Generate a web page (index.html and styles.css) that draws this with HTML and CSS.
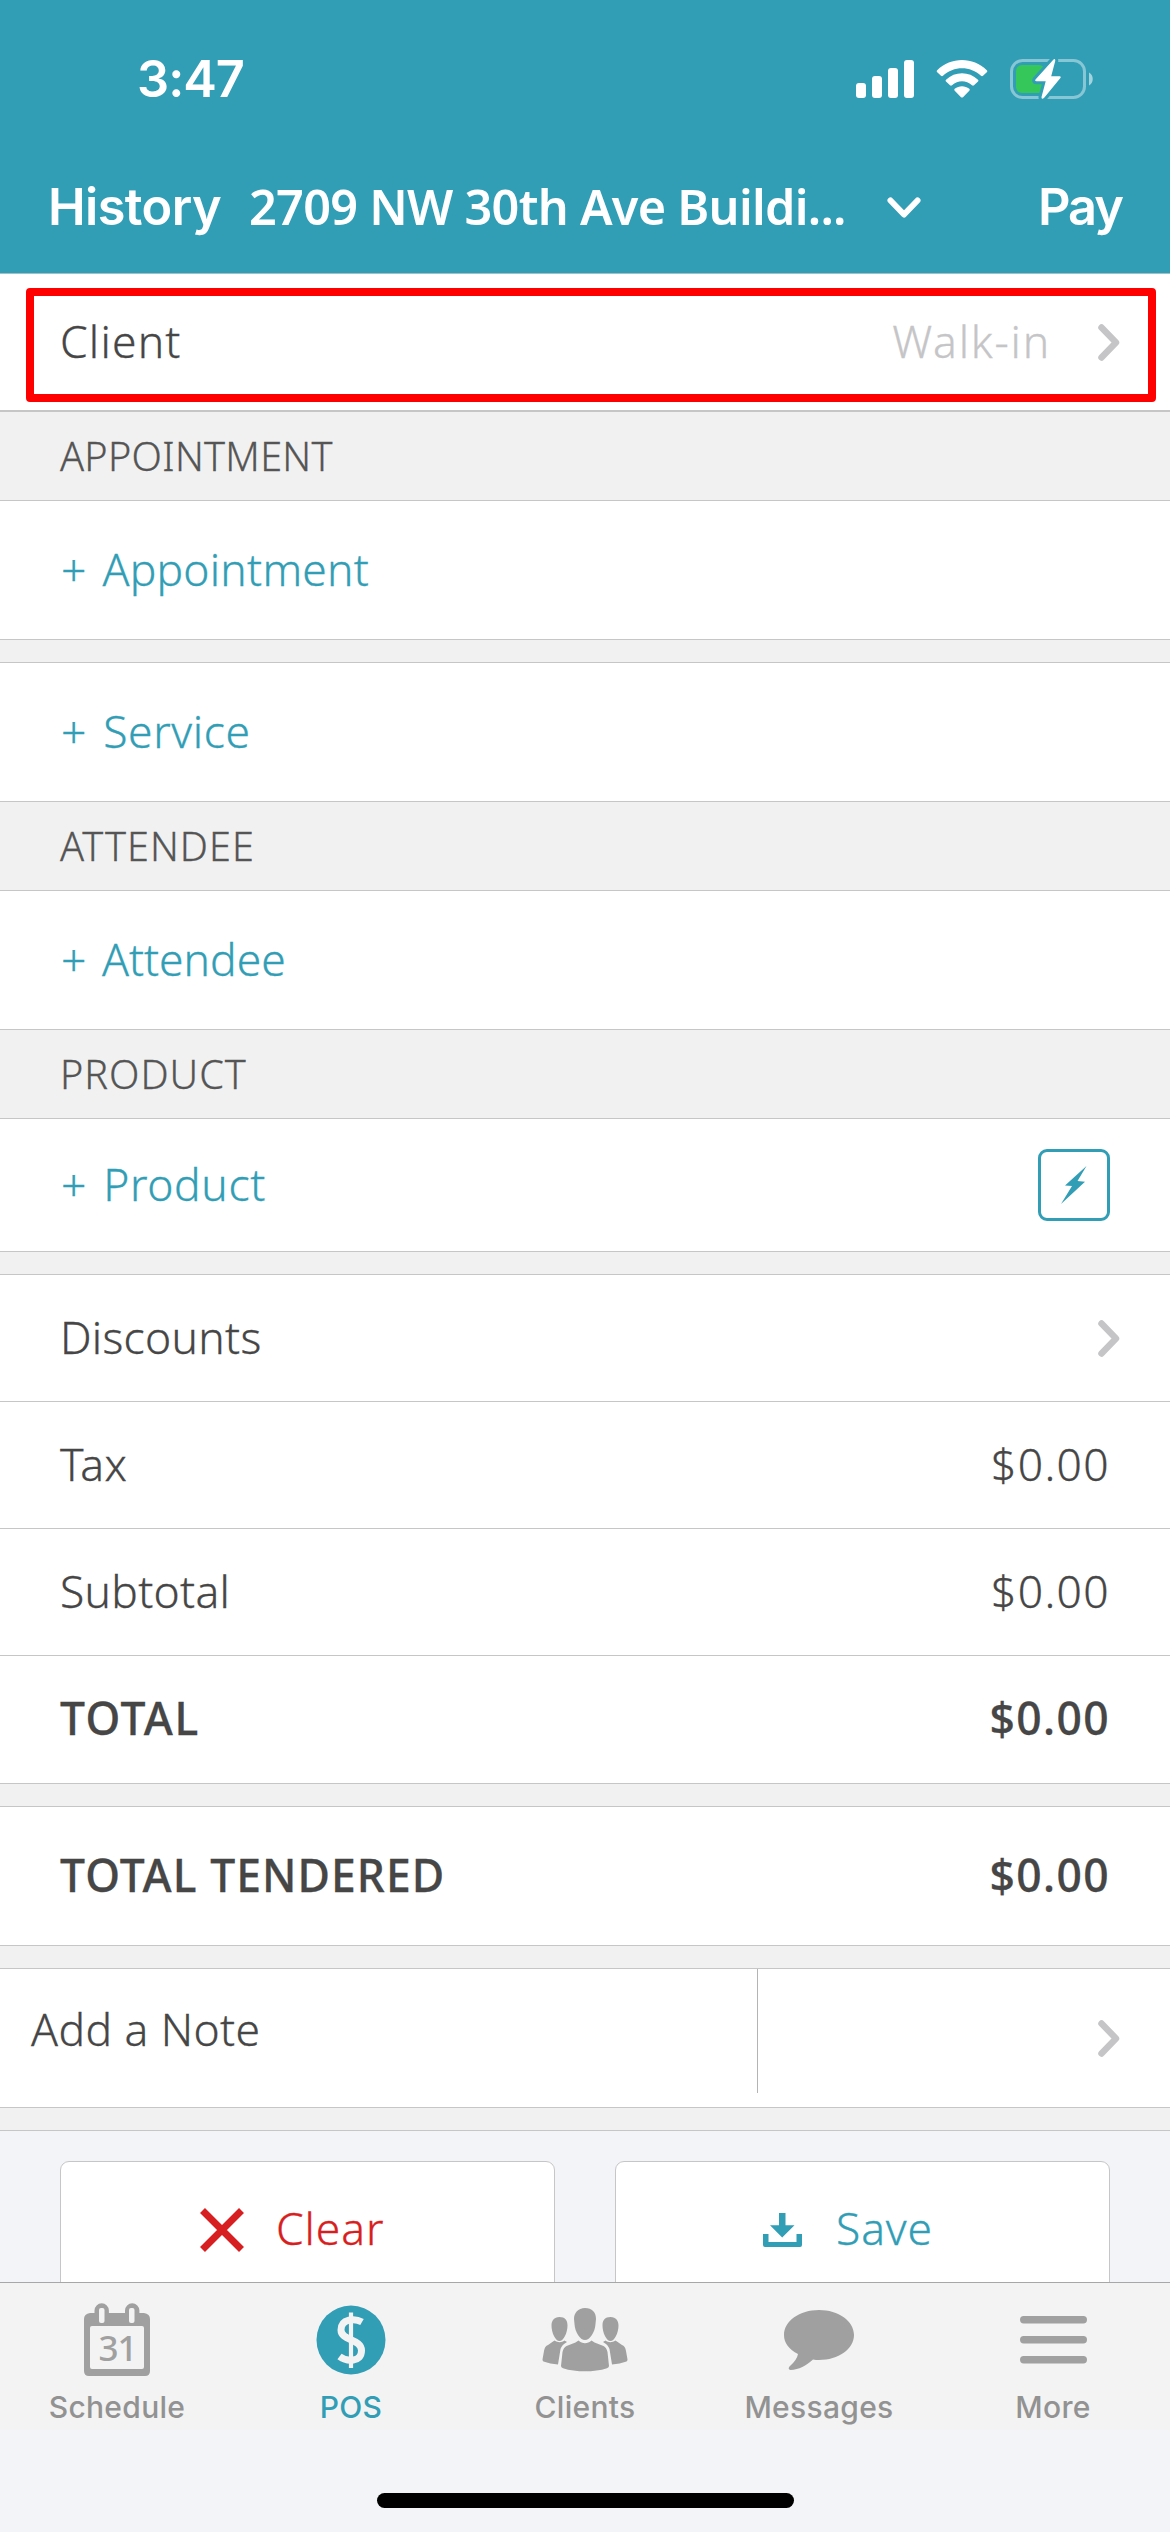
FILE: index.html
```html
<!DOCTYPE html>
<html lang="en">
<head>
<meta charset="utf-8">
<title>POS</title>
<link rel="stylesheet" href="styles.css">
</head>
<body>
<div class="screen">
  <header class="header">
    <div class="status-bar">
      <span class="clock">3:47</span>
      <div class="status-icons">
        <svg class="signal" width="58" height="38" viewBox="0 0 58 38" fill="#fff">
          <rect x="0" y="23" width="10" height="15" rx="3"/><rect x="16" y="16" width="10" height="22" rx="3"/><rect x="32" y="8" width="10" height="30" rx="3"/><rect x="48" y="0" width="10" height="38" rx="3"/>
        </svg>
        <svg class="wifi" width="52" height="38" viewBox="0 0 52 38" fill="#fff">
          <path d="M1.2 10.2C15-3.4 37-3.4 50.8 10.2q1 1 0 2L47 15.700q-1 .9-2 0C34.500 5.700 17.500 5.700 7 15.700q-1 .9-2 0L1.200 12.200q-1-1 0-2z"/>
          <path d="M10 19.700C19 11.100 33 11.100 42 19.700q1 1 0 1.900L38 25.300q-1 .8-2 0C30 19.900 22 19.900 16 25.300q-1 .8-2 0L10 21.600q-1-.9 0-1.900z"/>
          <path d="M18.700 28.800C23 25.300 29 25.300 33.300 28.800q1 .9 0 1.900L27 37.200q-1 .8-2 0L18.700 30.700q-1-1 0-1.900z"/>
        </svg>
        <svg class="battery" width="84" height="44" viewBox="0 0 84 44">
          <rect x="1.500" y="3.500" width="73" height="37" rx="11" fill="none" stroke="#fff" stroke-opacity=".42" stroke-width="3"/>
          <path d="M79 15.500c5 2.500 5 10.500 0 13z" fill="#fff" fill-opacity=".55"/>
          <rect x="6" y="8" width="29" height="28" rx="6" fill="#35c759"/>
          <path d="M43.500 2.500L25.500 22.600q-1 1.700 1 1.700h9.200L31.500 40q-.2 3 2.500 1L50.600 20.800q.8-1.600-1-1.600h-8.400L45.300 3.700q0-2.500-1.800-1.200z" fill="#fff" stroke="#319eb6" stroke-width="6" paint-order="stroke" stroke-linejoin="round"/>
        </svg>
      </div>
    </div>
    <nav class="nav-bar">
      <a class="nav-action">History</a>
      <h1 class="location">2709 NW 30th Ave Buildi...</h1>
      <svg class="drop" width="36" height="24" viewBox="0 0 36 24" fill="none" stroke="#fff" stroke-width="6" stroke-linecap="round" stroke-linejoin="round"><path d="M4.500 4.500L18 18.500 31.500 4.500"/></svg>
      <a class="nav-action pay">Pay</a>
    </nav>
  </header>

  <main class="content">
    <div class="row client">
      <span class="label wide">Client</span>
      <span class="value walkin">Walk-in</span>
      <svg class="chevron" width="22" height="37" viewBox="0 0 22 37"><path d="M3.500 3.500L18 18.500 3.500 33.500"/></svg>
      <div class="highlight"></div>
    </div>
    <h2 class="section">APPOINTMENT</h2>
    <div class="row tall"><a class="label add appointment"><span class="plus">+</span> Appointment</a></div>
    <div class="spacer"></div>
    <div class="row tall"><a class="label add"><span class="plus">+</span> Service</a></div>
    <h2 class="section spaced">ATTENDEE</h2>
    <div class="row tall"><a class="label add attendee"><span class="plus">+</span> Attendee</a></div>
    <h2 class="section spaced">PRODUCT</h2>
    <div class="row product">
      <a class="label add"><span class="plus">+</span> Product</a>
      <span class="quick"><svg width="26" height="38" viewBox="0 0 26 38" fill="#319eb6"><path d="M25.500 0L4 19.600l7 .5L0 38 24 15.700l-7.500-.6z"/></svg></span>
    </div>
    <div class="spacer"></div>
    <div class="row"><span class="label">Discounts</span><svg class="chevron" width="22" height="37" viewBox="0 0 22 37"><path d="M3.500 3.500L18 18.500 3.500 33.500"/></svg></div>
    <div class="row"><span class="label">Tax</span><span class="value">$0.00</span></div>
    <div class="row"><span class="label">Subtotal</span><span class="value">$0.00</span></div>
    <div class="row total"><span class="label">TOTAL</span><span class="value">$0.00</span></div>
    <div class="spacer"></div>
    <div class="row tall strong"><span class="label">TOTAL TENDERED</span><span class="value">$0.00</span></div>
    <div class="spacer"></div>
    <div class="row tall note">
      <div class="note-field">Add a Note</div>
      <svg class="chevron" width="22" height="37" viewBox="0 0 22 37"><path d="M3.500 3.500L18 18.500 3.500 33.500"/></svg>
    </div>
    <div class="spacer"></div>
    <div class="actions">
      <button class="btn clear">
        <svg width="44" height="44" viewBox="0 0 44 44" fill="none" stroke="#d71f21" stroke-width="7"><path d="M2.500 2.500L41.500 41.500M41.500 2.500L2.500 41.500"/></svg>
        <span>Clear</span>
      </button>
      <button class="btn save">
        <svg width="40" height="34" viewBox="0 0 40 34" fill="#319eb6"><path d="M16 0h6.500v12.300H31.500L19.200 24.500 7 12.300H16z"/><path d="M0 21h5.500v8h28v-8H39v11q0 2-2 2H2q-2 0-2-2z"/></svg>
        <span>Save</span>
      </button>
    </div>
  </main>

  <nav class="tab-bar">
    <a class="tab">
      <span class="tab-icon"><svg width="66" height="74" viewBox="0 0 66 74">
        <path d="M6 10h4.500V7.500a7.200 7.200 0 0 1 14.400 0V10H41V7.500a7.200 7.200 0 0 1 14.400 0V10H60q6 1 6 6v52q0 5-5 5H5q-5 0-5-5V16q0-5 6-6z" fill="#a0a0a0"/>
        <rect x="15" y="5" width="5.500" height="15" rx="2" fill="#f3f3f3"/><rect x="45" y="5" width="5.500" height="15" rx="2" fill="#f3f3f3"/>
        <rect x="6" y="23" width="54" height="43" rx="2" fill="#f3f3f3"/>
        <text class="cal-day" x="33.500" y="57.500" text-anchor="middle">31</text>
      </svg></span>
      <span class="tab-label">Schedule</span>
    </a>
    <a class="tab active">
      <span class="tab-icon"><svg width="70" height="70" viewBox="0 0 70 70">
        <circle cx="35" cy="35" r="34.500" fill="#319eb6"/>
        <path d="M46 17C39 13 25 13.500 25 25C25 36 45.500 33.500 45.500 45.500C45.500 57.500 31 57 23.500 51.500" fill="none" stroke="#f3f3f3" stroke-width="7"/>
        <path d="M35 7.500V63" stroke="#f3f3f3" stroke-width="4.200"/>
      </svg></span>
      <span class="tab-label">POS</span>
    </a>
    <a class="tab">
      <span class="tab-icon"><svg width="86" height="64" viewBox="0 0 86 64" fill="#a0a0a0">
        <path d="M43 0c-7 0-11 5-11 11l.5 5C33 24 38 32 43 32s10-8 10.500-16l.5-5C54 4 50 0 43 0z"/>
        <path d="M36.500 32.500c4 3.500 9 3.500 13 0l3 2 9 3.500q3 1.500 4 6l1.500 14q0 1.500-2 2.200c-13 4.200-31 4.200-44 0q-2-.7-2-2.200L20.500 44q1-4.500 4-6l9-3.500z"/>
        <path d="M17.500 9c-5.500 0-8 4-8 8.500C9.500 25 13.500 33 17.500 33s8-8 8-15.500C25.500 12 23 9 17.500 9zM12.500 32.500c3.500 2.300 7 2.300 10 0l2.500 1.500q-5 2.500-6.500 7L16 56.500Q8 55.800 1.500 53.500.5 53 .5 51.500L2 43q.8-5 4-6z"/>
        <path d="M68.500 9c5.500 0 8 4 8 8.500C76.500 25 72.500 33 68.500 33s-8-8-8-15.500C60.500 12 63 9 68.500 9zM73.500 32.500c-3.500 2.300-7 2.300-10 0l-2.500 1.500q5 2.500 6.500 7L70 56.500q8-.7 14.500-3 1-.5 1-2L84 43q-.8-5-4-6z"/>
      </svg></span>
      <span class="tab-label">Clients</span>
    </a>
    <a class="tab">
      <span class="tab-icon"><svg width="70" height="60" viewBox="0 0 70 60" fill="#a0a0a0"><path d="M35 0C54.500 0 70 11 70 25S54.500 50 35 50q-3 0-6-.5C22 56 15 59.500 6.500 60q-3-.5-1-3.500 7.500-6.500 8.500-12.500C5 39.500 0 33 0 25 0 11 15.500 0 35 0z"/></svg></span>
      <span class="tab-label">Messages</span>
    </a>
    <a class="tab">
      <span class="tab-icon"><svg width="68" height="48" viewBox="0 0 68 48" fill="#a0a0a0"><rect x="1" y="0" width="67" height="7.500" rx="3.700"/><rect x="1" y="20" width="67" height="7.500" rx="3.700"/><rect x="1" y="40" width="67" height="7.500" rx="3.700"/></svg></span>
      <span class="tab-label">More</span>
    </a>
  </nav>
  <footer class="home-area"><div class="home-bar"></div></footer>
</div>
</body>
</html>
```
FILE: styles.css
```css
* { box-sizing: border-box; }
body {
  margin: 0;
  font-family: "Noto Sans", "Open Sans", sans-serif;
  font-size: 44.4px;
  font-weight: 300;
  color: #464646;
}
.screen {
  width: 1170px;
  height: 2532px;
  display: flex;
  flex-direction: column;
  overflow: hidden;
  background: #f3f4f7;
}

/* Header */
.header {
  height: 274px;
  flex: none;
  background: #319eb6;
  border-bottom: 1px solid #a3bfc6;
  color: #fff;
  font-family: Inter, "Liberation Sans", sans-serif;
  font-weight: 600;
}
.status-bar {
  height: 158px;
  padding: 0 76px 0 137px;
  display: flex;
  align-items: center;
  justify-content: space-between;
}
.clock { font-size: 50.5px; letter-spacing: -1px; padding-bottom: 2px; }
.status-icons { display: flex; align-items: center; padding-bottom: 1px; }
.wifi { margin: 0 22px; }
.nav-bar {
  height: 100px;
  display: flex;
  align-items: center;
  padding: 0 48px;
}
.nav-action { font-size: 50.5px; letter-spacing: -.6px; width: 201px; padding-bottom: 3px; }
.pay { width: auto; margin-left: auto; letter-spacing: -2px; }
.location {
  margin: 0;
  font: 600 48.6px "Noto Sans", sans-serif;
  letter-spacing: -.72px;
  white-space: nowrap;
  padding-bottom: 4px;
}
.drop { margin-left: 40px; }

/* List rows */
.content { height: 2008px; flex: none; overflow: hidden; }
.row {
  height: 127px;
  display: flex;
  align-items: center;
  padding: 0 61px 0 60px;
  background: #fff;
  border-bottom: 1px solid #c6c6c6;
}
.tall { height: 139px; }
.product { height: 133px; }
.total { height: 128px; }
.total, .strong { font-weight: 500; }
.total .label { letter-spacing: 1.5px; }
.strong .label { letter-spacing: 1.08px; }
.label, .value { padding-bottom: 3px; letter-spacing: .3px; -webkit-text-stroke: .3px currentColor; }
.label.wide { letter-spacing: 1.2px; }
.value { margin-left: auto; margin-right: -1px; letter-spacing: 1.35px; }
.add { color: #319eb6; letter-spacing: .65px; }
.appointment { letter-spacing: .25px; }
.attendee { letter-spacing: 0; }
.plus { margin: 0 4px 0 1px; }
.chevron {
  margin: 0 -11px 0 auto;
  fill: none;
  stroke: #c5c5c7;
  stroke-width: 6.500px;
  stroke-linecap: round;
  stroke-linejoin: round;
}
.client { height: 138px; border-bottom-width: 2px; position: relative; }
.walkin { color: #c5c5c7; letter-spacing: 1.8px; margin-right: 47px; }
.client .chevron { margin-left: 0; }
.highlight {
  position: absolute;
  left: 26px;
  right: 14px;
  top: 14px;
  height: 114px;
  border: 8px solid #f00;
  border-radius: 4px;
}
.section {
  margin: 0;
  height: 89px;
  display: flex;
  align-items: center;
  padding: 0 60px 1px;
  background: #f1f1f1;
  border-bottom: 1px solid #c6c6c6;
  color: #555;
  font-size: 39.6px;
  font-weight: 300;
  letter-spacing: .3px;
  -webkit-text-stroke: .3px currentColor;
}
.spaced { letter-spacing: 1px; }
.spacer { height: 23px; background: #f1f1f1; border-bottom: 1px solid #c6c6c6; }
.quick {
  width: 72px;
  height: 72px;
  margin-left: auto;
  margin-right: -1px;
  display: flex;
  align-items: center;
  justify-content: center;
  border: 3px solid #319eb6;
  border-radius: 9px;
}
.note { padding-left: 0; }
.note-field {
  width: 758px;
  height: 124px;
  align-self: flex-start;
  padding: 30px 31px 0;
  line-height: 60px;
  letter-spacing: .43px;
  border-right: 1px solid #b4b4b4;
  -webkit-text-stroke: .3px currentColor;
}

/* Action buttons */
.actions { display: grid; grid-template-columns: 495px 495px; gap: 60px; padding: 30px 60px 0; }
.btn {
  height: 138px;
  display: flex;
  align-items: center;
  padding: 0;
  background: #fff;
  border: 1px solid #c6c6c6;
  border-radius: 9px;
  font: inherit;
  -webkit-text-stroke: .3px currentColor;
}
.btn span { padding-bottom: 4px; letter-spacing: .9px; }
.clear { color: #d71f21; padding-left: 139px; }
.clear span { margin-left: 32px; }
.save { color: #319eb6; padding-left: 147px; }
.save span { margin-left: 33px; }

/* Tab bar */
.tab-bar {
  height: 148px;
  flex: none;
  display: grid;
  grid-template-columns: repeat(5, 1fr);
  background: #f3f3f3;
  border-top: 1px solid #a7a7a7;
}
.tab {
  display: flex;
  flex-direction: column;
  align-items: center;
  color: #929292;
  font: 500 30px Inter, sans-serif;
}
.tab-icon { height: 113px; display: flex; align-items: center; }
.tab-label { line-height: 36px; margin-top: -7px; letter-spacing: .3px; }
.active { color: #319eb6; }
.cal-day { font: 500 35px "Noto Sans", sans-serif; letter-spacing: -1px; fill: #a0a0a0; }
.home-area { flex: 1; display: flex; justify-content: center; padding-top: 63px; }
.home-bar { width: 417px; height: 15px; border-radius: 8px; background: #000; }
```
